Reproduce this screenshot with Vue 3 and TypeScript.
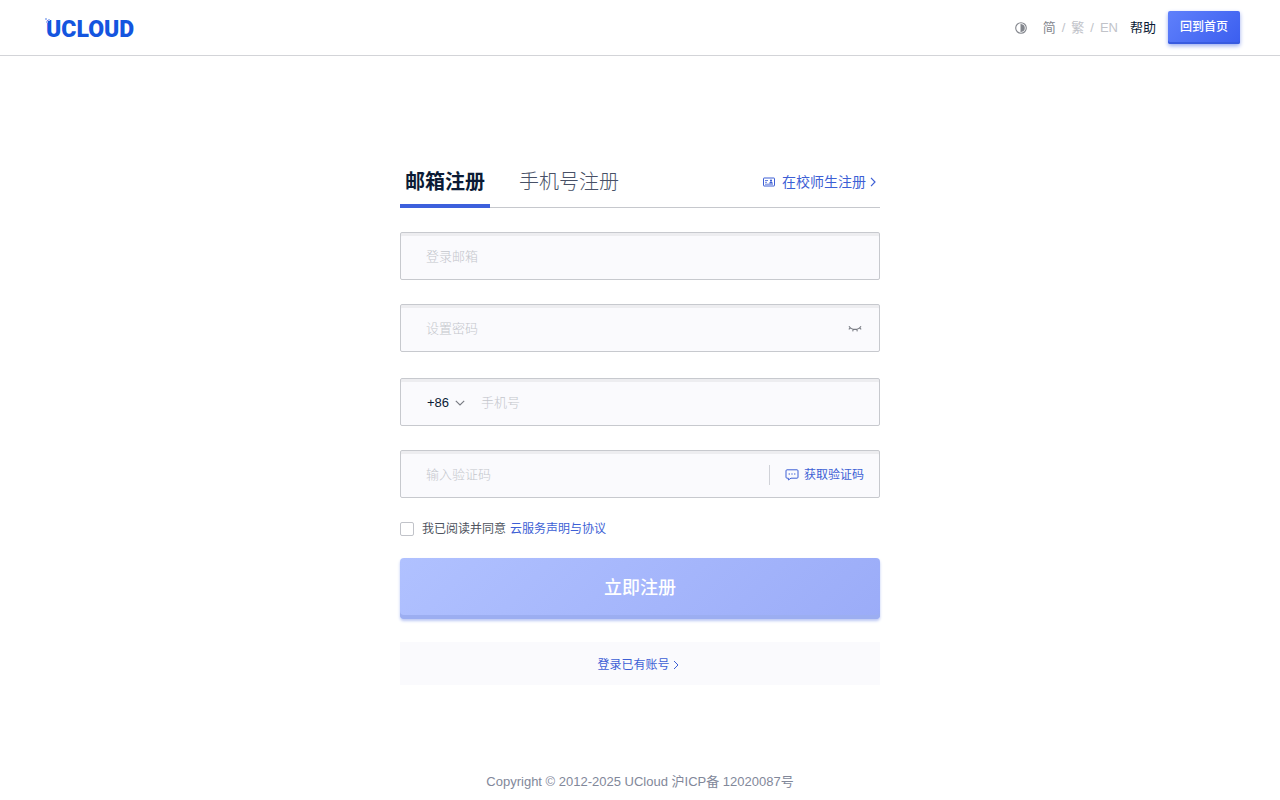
<script setup lang="ts">
import { computed, ref } from 'vue'

type Tab = 'email' | 'phone'
type Locale = 'zh-CN' | 'zh-TW' | 'en'

const tabs: { id: Tab; label: string }[] = [
  { id: 'email', label: '邮箱注册' },
  { id: 'phone', label: '手机号注册' },
]
const locales: { id: Locale; label: string }[] = [
  { id: 'zh-CN', label: '简' },
  { id: 'zh-TW', label: '繁' },
  { id: 'en', label: 'EN' },
]
const areaCodes = ['+86', '+852', '+853', '+886']

const activeTab = ref<Tab>('email')
const locale = ref<Locale>('zh-CN')
const email = ref('')
const password = ref('')
const showPassword = ref(false)
const areaCode = ref('+86')
const phone = ref('')
const code = ref('')
const agreed = ref(false)

const passwordType = computed(() => (showPassword.value ? 'text' : 'password'))
</script>

<template>
  <div class="page">
    <header class="topbar">
      <a class="brand" href="#" aria-label="UCLOUD">
        <svg width="100" height="36" viewBox="0 0 100 36" aria-hidden="true">
          <text class="brand-text" x="2" y="27">UCLOUD</text>
          <g class="brand-dots">
            <rect x="1" y="8" width="2" height="2" />
            <rect x="4" y="9" width="2" height="2" />
            <rect x="2" y="11" width="2" height="2" />
          </g>
        </svg>
      </a>
      <nav class="tools">
        <button class="theme" type="button" aria-label="切换主题">
          <svg width="12" height="12" viewBox="0 0 12 12">
            <circle cx="6" cy="6" r="5.3" fill="none" stroke="currentColor" stroke-width="1.1" />
            <path d="M6 2.2a3.8 3.8 0 0 1 0 7.6z" fill="currentColor" />
            <path d="M6 2v8" stroke="currentColor" />
          </svg>
        </button>
        <div class="locales">
          <template v-for="(item, i) in locales" :key="item.id">
            <span v-if="i > 0" class="slash">/</span>
            <button type="button" :class="{ current: locale === item.id }" @click="locale = item.id">{{ item.label }}</button>
          </template>
        </div>
        <a class="help" href="#">帮助</a>
        <a class="home" href="#">回到首页</a>
      </nav>
    </header>

    <main class="content">
      <form class="register" @submit.prevent>
        <div class="tabs">
          <button
            v-for="tab in tabs"
            :key="tab.id"
            type="button"
            class="tab"
            :class="{ active: activeTab === tab.id }"
            @click="activeTab = tab.id"
          >{{ tab.label }}</button>
          <a class="campus" href="#">
            <svg width="12" height="10" viewBox="0 0 12 10" aria-hidden="true">
              <rect x="0.5" y="1" width="11" height="8" rx="0.5" fill="none" stroke="currentColor" />
              <path d="M2 3.5h3M2 5.3h2M2 7.2h8" stroke="currentColor" stroke-width="0.8" />
              <circle cx="8" cy="3.6" r="1.1" fill="currentColor" />
              <path d="M6.2 6.6c0-2.4 3.6-2.4 3.6 0z" fill="currentColor" />
            </svg>
            <span>在校师生注册</span>
            <svg width="6" height="10" viewBox="0 0 6 10" aria-hidden="true">
              <path d="M1 0.8 5 5 1 9.2" fill="none" stroke="currentColor" stroke-width="1.2" />
            </svg>
          </a>
        </div>

        <div class="group">
          <div class="field">
            <input v-model="email" type="email" placeholder="登录邮箱" aria-label="登录邮箱" />
          </div>
          <div class="field">
            <input v-model="password" :type="passwordType" placeholder="设置密码" aria-label="设置密码" />
            <button class="eye" type="button" aria-label="显示密码" @click="showPassword = !showPassword">
              <svg width="14" height="8" viewBox="0 0 14 8">
                <path
                  d="M1 1.2C3.6 5.4 10.4 5.4 13 1.2M2.4 2.8 0.8 4.3M5.2 4.3 4.7 6.3M8.8 4.3 9.3 6.3M11.6 2.8 13.2 4.3"
                  fill="none" stroke="currentColor" stroke-width="1.1"
                />
              </svg>
            </button>
          </div>
        </div>

        <div class="group">
          <div class="field">
            <div class="area">
              <select v-model="areaCode" aria-label="国家或地区代码">
                <option v-for="item in areaCodes" :key="item">{{ item }}</option>
              </select>
              <svg width="10" height="6" viewBox="0 0 10 6" aria-hidden="true">
                <path d="M0.8 0.8 5 5 9.2 0.8" fill="none" stroke="currentColor" stroke-width="1.1" />
              </svg>
            </div>
            <input v-model="phone" type="tel" placeholder="手机号" aria-label="手机号" />
          </div>
          <div class="field">
            <input v-model="code" type="text" placeholder="输入验证码" aria-label="输入验证码" />
            <button class="send" type="button">
              <svg width="14" height="12" viewBox="0 0 14 12" aria-hidden="true">
                <path d="M2 0.8h10a1 1 0 0 1 1 1v6.4a1 1 0 0 1-1 1H6L3.4 11V9.2H2a1 1 0 0 1-1-1V1.8a1 1 0 0 1 1-1z" fill="none" stroke="currentColor" />
                <path d="M3.6 5h1.4M6.3 5h1.4M9 5h1.4" stroke="currentColor" stroke-width="1.1" />
              </svg>
              <span>获取验证码</span>
            </button>
          </div>
        </div>

        <div class="agreement">
          <input id="agree" v-model="agreed" type="checkbox" />
          <label for="agree">我已阅读并同意</label>
          <a href="#">云服务声明与协议</a>
        </div>

        <button class="submit" type="submit">立即注册</button>

        <a class="login" href="#">
          <span>登录已有账号</span>
          <svg width="6" height="10" viewBox="0 0 6 10" aria-hidden="true">
            <path d="M1 1 5 5 1 9" fill="none" stroke="currentColor" />
          </svg>
        </a>
      </form>
    </main>

    <footer class="footer">Copyright © 2012-2025 UCloud 沪ICP备 12020087号</footer>
  </div>
</template>

<style>
body {
  margin: 0;
  background: #fff;
}
</style>

<style scoped>
.page,
.page * {
  box-sizing: border-box;
}
.page {
  display: flex;
  flex-direction: column;
  min-height: 100vh;
  color: #0b1b35;
  font-family: "Liberation Sans", "Noto Sans CJK SC", sans-serif;
  font-size: 12px;
  line-height: 20px;
}
button,
input,
select {
  margin: 0;
  padding: 0;
  border: 0;
  background: none;
  color: inherit;
  font: inherit;
}
button {
  cursor: pointer;
}
a {
  color: #3d5fd5;
  text-decoration: none;
}
svg {
  display: block;
  flex: none;
}

.topbar {
  display: flex;
  align-items: center;
  justify-content: space-between;
  height: 56px;
  padding: 0 40px 0 44px;
  border-bottom: 1px solid #d3d4d8;
}
.brand-text {
  fill: #1455df;
  font-family: Roboto, sans-serif;
  font-size: 23px;
  font-weight: 900;
}
.brand-dots {
  fill: #a9bff3;
}
.tools {
  display: flex;
  align-items: center;
  gap: 12px;
  font-size: 13px;
}
.theme {
  margin-right: 4px;
  color: #83868d;
}
.locales {
  display: flex;
  gap: 6px;
  color: #c1c3c9;
}
.locales .current {
  color: #83868d;
}
.help {
  color: #0b1b35;
}
.home {
  height: 33px;
  padding: 0 12px;
  border-radius: 2px;
  background: linear-gradient(135deg, #5f80fb, #3b5eef);
  box-shadow: inset 0 -2px 0 #385be0, 0 2px 4px #9badf0;
  color: #fff;
  font-size: 12px;
  font-weight: 500;
  line-height: 32px;
}

.content {
  flex: 1;
  padding: 100px 16px 0;
}
.register {
  width: 100%;
  max-width: 480px;
  margin: 0 auto;
}
.tabs {
  display: flex;
  height: 52px;
  border-bottom: 1px solid #c6c8cd;
}
.tab {
  height: 52px;
  margin-right: 24px;
  padding: 4px 5px 0;
  border-bottom: 4px solid transparent;
  color: #475066;
  font-size: 20px;
  font-weight: 300;
  line-height: 44px;
}
.tab.active {
  border-color: #3d60dc;
  color: #0b1b35;
  font-weight: 700;
}
.campus {
  display: flex;
  align-items: center;
  margin-left: auto;
  padding-right: 4px;
  font-size: 14px;
}
.campus span {
  margin: 0 4px 0 7px;
}

.group {
  display: grid;
  gap: 24px;
  margin-top: 24px;
}
.group + .group {
  margin-top: 26px;
}
.field {
  display: flex;
  align-items: center;
  height: 48px;
  padding: 0 15px 0 25px;
  border: 1px solid #c7c9ce;
  border-radius: 2px;
  background: #fafafd;
  box-shadow: inset 0 3px 0 #ededf0;
  font-size: 13px;
}
.field > input {
  flex: 1;
  min-width: 0;
  height: 44px;
  outline: none;
  font-weight: 300;
}
.field > input::placeholder {
  color: #c4c6cc;
  opacity: 1;
}
.field:focus-within {
  border-color: #3d60dc;
}
.eye {
  padding: 4px 2px 2px;
  color: #777a82;
}
.area {
  display: flex;
  align-items: center;
  margin-right: 16px;
  padding-top: 2px;
  color: #777a82;
}
.area select {
  width: 28px;
  margin-left: 1px;
  appearance: none;
  outline: none;
  color: #0b1b35;
}
.send {
  display: flex;
  align-items: center;
  gap: 5px;
  margin-top: 2px;
  padding-left: 15px;
  border-left: 1px solid #d0d2d8;
  color: #3d5fd5;
  font-size: 12px;
}

.agreement {
  display: flex;
  align-items: center;
  margin-top: 21px;
  color: #4e535e;
}
.agreement input {
  width: 14px;
  height: 14px;
  margin-right: 8px;
  border: 1px solid #c1c3c9;
  border-radius: 2px;
  appearance: none;
}
.agreement input:checked {
  background: #3d60dc;
}
.agreement a {
  margin-left: 4px;
}
.submit {
  display: block;
  width: 100%;
  height: 61px;
  margin-top: 19px;
  padding-bottom: 2px;
  border-radius: 4px;
  background: linear-gradient(135deg, #b0c1ff, #9bacf8);
  box-shadow: inset 0 -4px 0 #9caef1, 0 2px 3px #bcc8f4;
  color: #fff;
  font-size: 18px;
  font-weight: 500;
}
.login {
  display: flex;
  align-items: center;
  justify-content: center;
  gap: 3px;
  height: 43px;
  margin-top: 23px;
  padding: 2px 4px 0 0;
  background: #fafafd;
}
.footer {
  padding: 16px 16px 8px;
  color: #82889a;
  font-size: 13px;
  text-align: center;
}
</style>
